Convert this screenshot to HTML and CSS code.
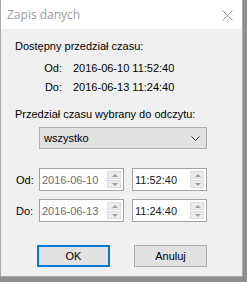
FILE: index.html
```html
<!DOCTYPE html>
<html lang="pl">
<head>
  <meta charset="UTF-8" />
  <title>Zapis danych</title>
  <link rel="stylesheet" href="styles.css">
</head>
<body>
  <div class="window">
    <div class="titlebar">
      <span class="title">Zapis danych</span>
      <svg class="close" width="11" height="11" viewBox="0 0 11 11">
        <path d="M0.5 0.5 L10.5 10.5 M10.5 0.5 L0.5 10.5" stroke="#a3a3a3" stroke-width="1" fill="none" />
      </svg>
    </div>
    <div class="content">
      <div class="label">Dostępny przedział czasu:</div>
      <div class="range">
        <span class="range-key">Od:</span><span>2016-06-10 11:52:40</span>
        <span class="range-key">Do:</span><span>2016-06-13 11:24:40</span>
      </div>

      <div class="label label-second">Przedział czasu wybrany do odczytu:</div>
      <div class="select">
        <span>wszystko</span>
        <svg width="9" height="5" viewBox="0 0 9 5">
          <polyline points="0.5,0.5 4.5,4.5 8.5,0.5" stroke="#333" stroke-width="1" fill="none" />
        </svg>
      </div>

      <div class="pick-row first">
        <span class="pick-key">Od:</span>
        <div class="field date">
          <span>2016-06-10</span>
          <div class="spin"><div class="spin-up"></div><div class="spin-down"></div></div>
        </div>
        <div class="field time">
          <span>11:52:40</span>
          <div class="spin"><div class="spin-up"></div><div class="spin-down"></div></div>
        </div>
      </div>
      <div class="pick-row">
        <span class="pick-key">Do:</span>
        <div class="field date">
          <span>2016-06-13</span>
          <div class="spin"><div class="spin-up"></div><div class="spin-down"></div></div>
        </div>
        <div class="field time">
          <span>11:24:40</span>
          <div class="spin"><div class="spin-up"></div><div class="spin-down"></div></div>
        </div>
      </div>

      <div class="buttons">
        <button class="btn btn-default">OK</button>
        <button class="btn">Anuluj</button>
      </div>
    </div>
  </div>
</body>
</html>
```

FILE: styles.css
```css
body {
  margin: 0;
  width: 247px;
  height: 282px;
  background: #8e8e8e;
  font-family: "Liberation Sans", Arial, sans-serif;
  font-size: 11px;
  color: #000;
  overflow: hidden;
}
.window {
  width: 241px;
  height: 276px;
  border: 1px solid #a8a8a8;
  border-top: none;
  background: #f0f0f0;
}
.titlebar {
  height: 29px;
  background: #fff;
  display: flex;
  align-items: center;
  justify-content: space-between;
  padding: 0 9px 0 6px;
}
.title {
  font-family: "Open Sans", "Noto Sans", sans-serif;
  font-size: 12px;
  color: #9a9a9a;
  padding-bottom: 1px;
}
.close {
  margin-top: 1px;
}
.content {
  padding: 10px 0 0 14px;
}
.label {
  line-height: 14px;
  height: 14px;
}
.label-second {
  margin-top: 10px;
}
.range {
  display: grid;
  grid-template-columns: 47px auto;
  column-gap: 11px;
  margin-top: 6px;
}
.range span {
  line-height: 19px;
}
.range-key {
  text-align: right;
}
.select {
  margin: 6px 0 0 24px;
  width: 164px;
  height: 20px;
  border: 1px solid #adadad;
  background: #e1e1e1;
  display: flex;
  align-items: center;
  justify-content: space-between;
  padding: 0 6px 0 4px;
  box-sizing: content-box;
  width: 156px;
}
.pick-row {
  display: flex;
  align-items: center;
  margin-top: 8px;
}
.pick-row.first {
  margin-top: 19px;
}
.pick-key {
  width: 24px;
  padding-left: 1px;
  box-sizing: border-box;
}
.field {
  height: 21px;
  border: 1px solid #a3a3a3;
  background: #fff;
  display: flex;
  align-items: center;
  justify-content: space-between;
  padding: 0 2px 0 2px;
}
.date {
  width: 79px;
  color: #6d6d6d;
}
.time {
  width: 69px;
  margin-left: 8px;
  color: #1a1a1a;
}
.spin {
  width: 14px;
  height: 17px;
  display: flex;
  flex-direction: column;
  gap: 1px;
}
.spin-up,
.spin-down {
  flex: 1;
  background: #ececec;
  border: 1px solid #dcdcdc;
  position: relative;
}
.spin-up::after,
.spin-down::after {
  content: "";
  position: absolute;
  left: 4px;
  top: 2px;
  border-left: 3px solid transparent;
  border-right: 3px solid transparent;
}
.spin-up::after {
  border-bottom: 3px solid #a0a0a0;
}
.spin-down::after {
  border-top: 3px solid #a0a0a0;
  top: 2px;
}
.buttons {
  display: flex;
  gap: 24px;
  margin: 23px 0 0 22px;
}
.btn {
  width: 73px;
  height: 22px;
  border: 1px solid #adadad;
  background: #e1e1e1;
  font-family: "Liberation Sans", Arial, sans-serif;
  font-size: 11px;
  color: #000;
  padding: 0;
}
.btn-default {
  border: 2px solid #0078d7;
}
```
